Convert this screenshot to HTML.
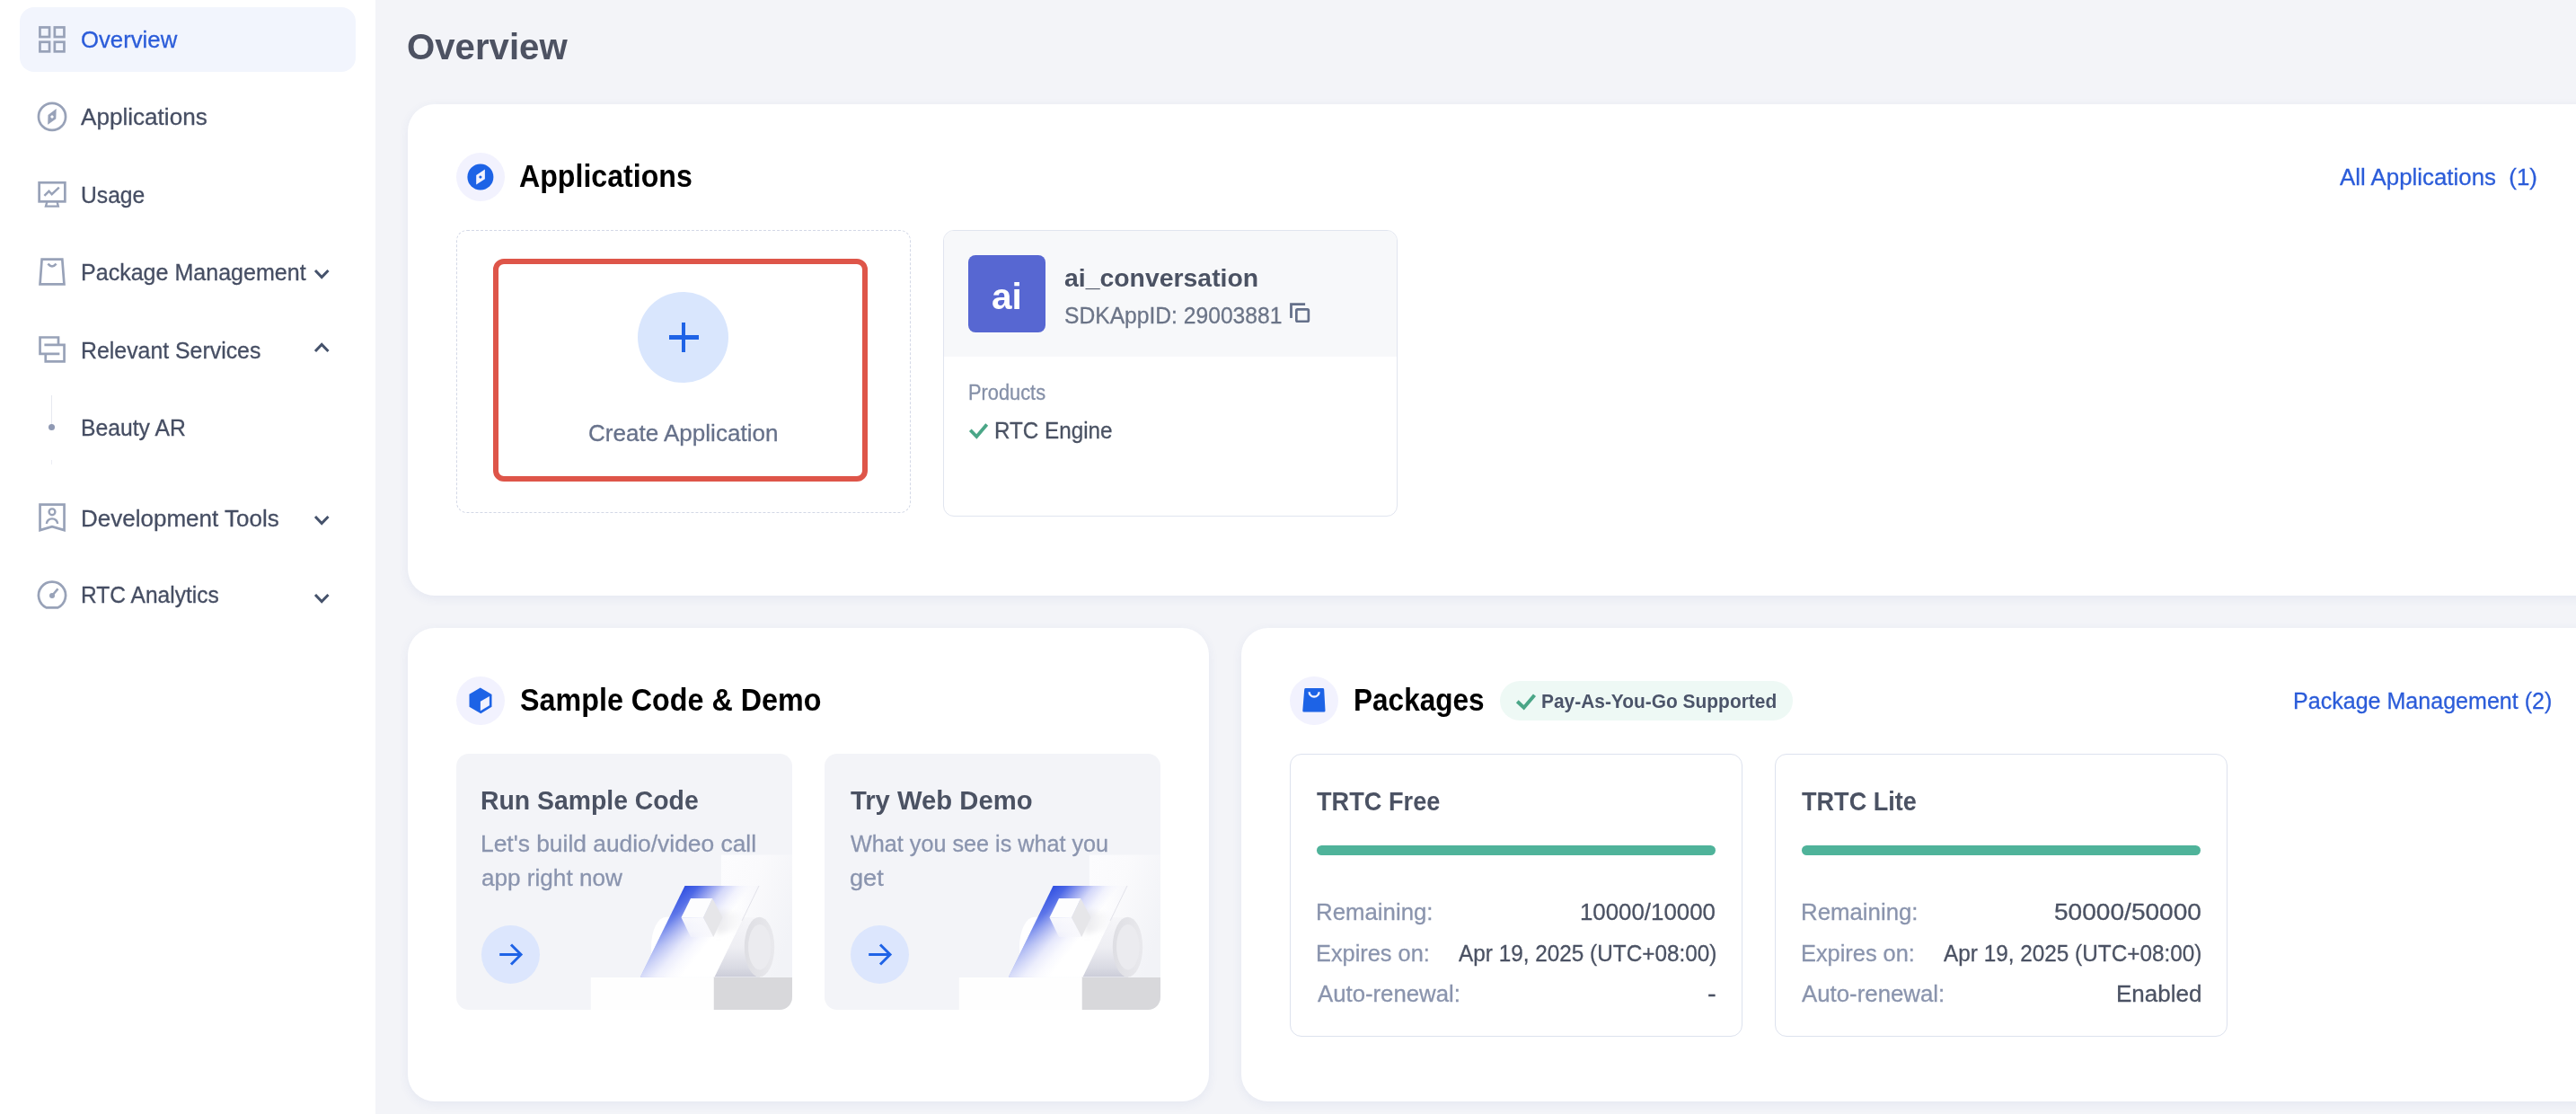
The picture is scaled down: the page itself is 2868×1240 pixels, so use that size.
<!DOCTYPE html>
<html lang="en">
<head>
<meta charset="utf-8">
<title>Overview</title>
<style>
*{box-sizing:border-box;margin:0;padding:0}
html,body{width:2868px;height:1240px;overflow:hidden}
body{position:relative;background:#f3f4f8;font-family:"Liberation Sans",sans-serif;color:#4a566e}
.abs{position:absolute}
.t{position:absolute;white-space:nowrap;line-height:1;transform-origin:0 0;font-weight:400;-webkit-text-stroke:.3px;text-decoration:none;font-family:inherit;background:none;border:0}
.b{font-weight:700;-webkit-text-stroke:0}
.sidebar{position:absolute;left:0;top:0;width:418px;height:1240px;background:#fff}
.active{position:absolute;left:22px;top:8px;width:374px;height:72px;border-radius:16px;background:#f2f5fd}
.card{position:absolute;background:#fff;border-radius:30px;box-shadow:0 3px 12px rgba(60,85,160,.075)}
.ico{position:absolute;overflow:visible}
.hicon{position:absolute;width:54px;height:54px;border-radius:50%;background:#f2f2fe}
</style>
</head>
<body>
<div class="sidebar"></div>
<div class="active"></div>

<!-- sidebar icons -->
<svg class="ico" style="left:40px;top:26px" width="36" height="36" viewBox="0 0 36 36" fill="none" stroke="#98a2b8" stroke-width="2.7">
  <rect x="4.45" y="4.45" width="10.6" height="10.6"/><rect x="20.85" y="4.45" width="10.6" height="10.6"/>
  <rect x="4.45" y="20.75" width="10.6" height="10.6"/><rect x="20.85" y="20.75" width="10.6" height="10.6"/>
</svg>
<svg class="ico" style="left:40px;top:112px" width="36" height="36" viewBox="0 0 36 36" fill="none" stroke="#98a2b8" stroke-width="2.7">
  <circle cx="18" cy="17.9" r="15.05"/>
  <path d="M22.7 9.1 L22.3 20.3 L13.2 26.8 L13.5 16 Z" fill="#98a2b8" stroke="none"/>
  <path d="M18 15.9 L20 17.9 L18 19.9 L16 17.9 Z" fill="#fff" stroke="none"/>
</svg>
<svg class="ico" style="left:40px;top:198px" width="36" height="36" viewBox="0 0 36 36" fill="none" stroke="#98a2b8" stroke-width="2.7">
  <rect x="3.65" y="5.25" width="28.7" height="21.1"/>
  <path d="M12.45 26.4 L10.95 31.65 H24.85 L23.55 26.4" stroke-width="2.3"/>
  <path d="M9.4 19.8 L14.5 14.8 L17.7 18.2 L25.8 10.6" stroke-width="2.4"/>
</svg>
<svg class="ico" style="left:40px;top:284px" width="36" height="36" viewBox="0 0 36 36" fill="none" stroke="#98a2b8" stroke-width="2.7">
  <path d="M6.6 4.55 H29.3 L31.45 32.45 H4.55 Z"/>
  <path d="M13.4 9.6 Q18 15.2 22.6 9.6" stroke-width="2.5"/>
</svg>
<svg class="ico" style="left:40px;top:371px" width="36" height="36" viewBox="0 0 36 36" fill="none" stroke="#98a2b8" stroke-width="2.7">
  <path d="M25 12.85 V4.5 H4.55 V22.8 H26.35"/>
  <path d="M10.75 22.8 V31.45 H31.55 V12.85 H9.4"/>
</svg>
<div class="abs" style="left:57px;top:440px;width:1px;height:32px;background:#e6e9f0"></div>
<div class="abs" style="left:57px;top:512px;width:1px;height:5px;background:#eceef4"></div>
<div class="abs" style="left:54px;top:472px;width:7px;height:7px;border-radius:50%;background:#8f99b3"></div>
<svg class="ico" style="left:40px;top:558px" width="36" height="36" viewBox="0 0 36 36" fill="none" stroke="#98a2b8" stroke-width="2.7">
  <path d="M4.55 32.1 V3.55 H31.55 V32.1 L18 28.25 Z"/>
  <circle cx="18" cy="11.8" r="3.4" stroke-width="2.4"/>
  <path d="M11.9 24.9 A6.1 5.5 0 0 1 24.1 24.9" stroke-width="2.4"/>
</svg>
<svg class="ico" style="left:40px;top:644px" width="36" height="36" viewBox="0 0 36 36" fill="none" stroke="#98a2b8" stroke-width="2.7">
  <path d="M11.88 32.45 A15.05 15.05 0 1 1 24.12 32.45 Z"/>
  <path d="M18 19 L24.5 11.4" stroke-width="2.5"/>
  <circle cx="18" cy="19" r="3" fill="#98a2b8" stroke="none"/>
</svg>
<!-- chevrons -->
<svg class="ico" style="left:348px;top:297px" width="20" height="16" viewBox="0 0 20 16" fill="none" stroke="#45526b" stroke-width="3"><path d="M3 4 L10.2 11.5 L17.5 4"/></svg>
<svg class="ico" style="left:348px;top:379px" width="20" height="16" viewBox="0 0 20 16" fill="none" stroke="#45526b" stroke-width="3"><path d="M3 12 L10.2 4.5 L17.5 12"/></svg>
<svg class="ico" style="left:348px;top:570.5px" width="20" height="16" viewBox="0 0 20 16" fill="none" stroke="#45526b" stroke-width="3"><path d="M3 4 L10.2 11.5 L17.5 4"/></svg>
<svg class="ico" style="left:348px;top:657.5px" width="20" height="16" viewBox="0 0 20 16" fill="none" stroke="#45526b" stroke-width="3"><path d="M3 4 L10.2 11.5 L17.5 4"/></svg>

<!-- Applications card -->
<div class="card" style="left:454px;top:115.5px;width:2500px;height:547px"></div>
<div class="hicon" style="left:508px;top:169.8px"></div>
<svg class="ico" style="left:520px;top:182px" width="30" height="30" viewBox="0 0 30 30">
  <circle cx="14.9" cy="14.9" r="14.5" fill="#1d63e6"/>
  <path d="M19.9 6.6 V17.3 L10.2 23.6 V12.9 Z" fill="#f2f2fe"/>
  <path d="M14.9 13.2 L16.8 15.1 L14.9 17 L13 15.1 Z" fill="#1d63e6"/>
</svg>

<!-- create app -->
<div class="abs" style="left:508px;top:256px;width:506px;height:315px;border:1px dashed #d3d8e6;border-radius:12px"></div>
<div class="abs" style="left:549px;top:288px;width:417px;height:248px;border:6px solid #de5549;border-radius:12px"></div>
<div class="abs" style="left:710.3px;top:324.5px;width:101px;height:101px;border-radius:50%;background:#d9e6fd"></div>
<div class="abs" style="left:744.5px;top:373px;width:33px;height:4.5px;background:#1f63e6"></div>
<div class="abs" style="left:758.7px;top:358.5px;width:4.6px;height:33px;background:#1f63e6"></div>

<!-- app card -->
<div class="abs" style="left:1050px;top:256px;width:506px;height:319px;border:1px solid #e1e5ef;border-radius:12px;background:#fff;overflow:hidden">
  <div class="abs" style="left:0;top:0;width:506px;height:140.4px;background:#f7f8fa"></div>
</div>
<div class="abs" style="left:1078px;top:284px;width:86px;height:86px;border-radius:8px;background:#5767d2"></div>
<svg class="ico" style="left:1434px;top:334px" width="28" height="28" viewBox="0 0 28 28" fill="none" stroke="#65708a" stroke-width="2.7">
  <rect x="9.35" y="10.45" width="13.5" height="13.3" rx="1.2"/>
  <path d="M3.5 19.9 V4.6 H19.1" stroke-width="2.8"/>
</svg>
<svg class="ico" style="left:1077px;top:468px" width="26" height="24" viewBox="0 0 26 24" fill="none" stroke="#4aa687" stroke-width="3.8"><path d="M3.3 10.8 L10.3 18 L21.7 4.5"/></svg>

<!-- Sample Code & Demo card -->
<div class="card" style="left:454px;top:699px;width:892px;height:527px"></div>
<div class="hicon" style="left:508px;top:753px"></div>
<svg class="ico" style="left:520px;top:764px" width="30" height="32" viewBox="0 0 30 32">
  <path d="M14.8 1.6 L27.5 9 V22.8 L15.3 30.3 L2.5 22.8 V8.7 Z" fill="#1d63e6"/>
  <path d="M14.9 16.8 L24.9 11 V21.2 L14.9 27.2 Z" fill="#f2f2fe"/>
</svg>

<svg width="0" height="0" style="position:absolute">
  <defs>
    <linearGradient id="gEdge" gradientUnits="userSpaceOnUse" x1="254.5" y1="147" x2="301.1" y2="183">
      <stop offset="0" stop-color="#2f4fe1"/><stop offset=".2" stop-color="#4864e6"/>
      <stop offset=".4" stop-color="#8d9bee"/><stop offset=".62" stop-color="#d3d7f9"/><stop offset=".82" stop-color="#f1f2fd"/><stop offset="1" stop-color="#ffffff"/>
    </linearGradient>
    <linearGradient id="gFadeV" gradientUnits="userSpaceOnUse" x1="0" y1="147" x2="0" y2="249">
      <stop offset="0" stop-color="#fff" stop-opacity="0"/><stop offset=".3" stop-color="#fff" stop-opacity=".12"/><stop offset=".65" stop-color="#fff" stop-opacity=".45"/><stop offset="1" stop-color="#fff" stop-opacity=".66"/>
    </linearGradient>
    <linearGradient id="gParaR" gradientUnits="userSpaceOnUse" x1="306" y1="147" x2="338" y2="147">
      <stop offset="0" stop-color="#f6f6fb" stop-opacity="0"/><stop offset="1" stop-color="#f5f5fa" stop-opacity=".85"/>
    </linearGradient>
    <linearGradient id="gBack" x1="0" y1="0" x2="1" y2="0.55">
      <stop offset="0" stop-color="#fcfcfe"/><stop offset=".45" stop-color="#fafafc"/><stop offset="1" stop-color="#f2f3f7"/>
    </linearGradient>
    <linearGradient id="gCyl" x1="0" y1="0" x2="0" y2="1">
      <stop offset="0" stop-color="#f6f6f9"/><stop offset=".5" stop-color="#eeeef3"/><stop offset=".85" stop-color="#d9dae3"/><stop offset="1" stop-color="#cbccd8"/>
    </linearGradient>
    <linearGradient id="gRing" x1="0" y1="0" x2="1" y2="0">
      <stop offset="0" stop-color="#dedee3"/><stop offset="1" stop-color="#e9e9ed"/>
    </linearGradient>
    <linearGradient id="gCubeF" x1="0" y1="0" x2="0" y2="1">
      <stop offset="0" stop-color="#fafafd"/><stop offset=".7" stop-color="#f8f8fc" stop-opacity=".85"/><stop offset="1" stop-color="#f6f6fb" stop-opacity=".5"/>
    </linearGradient>
    <linearGradient id="gShadow" x1="0" y1="0" x2="1" y2="0">
      <stop offset="0" stop-color="#d6d6db" stop-opacity=".6"/><stop offset="1" stop-color="#e8e8ec" stop-opacity="0"/>
    </linearGradient>
    <filter id="fBlur" x="-20%" y="-40%" width="140%" height="180%"><feGaussianBlur stdDeviation="3"/></filter>
    <g id="illus">
      <rect x="294.9" y="112.5" width="80" height="137" fill="url(#gBack)"/>
      <!-- cylinder -->
      <path d="M233.5 181.8 H338 V248.6 H233.5 A16.5 33.4 0 0 1 233.5 181.8 Z" fill="#ffffff"/>
      <path d="M300 181.8 H338 V248.6 H286 Z" fill="url(#gCyl)"/>
      <ellipse cx="337.5" cy="215.2" rx="16.7" ry="33.4" fill="url(#gRing)"/>
      <ellipse cx="337.8" cy="215.2" rx="12.7" ry="25.3" fill="#ebebef"/>
      <!-- parallelogram -->
      <path d="M254.5 147 H337 L287.4 248.6 H204.9 Z" fill="url(#gEdge)"/>
      <path d="M254.5 147 H337 L287.4 248.6 H204.9 Z" fill="url(#gFadeV)"/>
      <path d="M254.5 147 H337 L287.4 248.6 H204.9 Z" fill="url(#gParaR)"/>
      <path d="M337 147 L318 186" stroke="#dcdce4" stroke-width=".8" fill="none"/>
      <!-- cube shadow -->
      <path d="M288 174 L322 178 L316 194 L290 201 Z" fill="url(#gShadow)" filter="url(#fBlur)"/>
      <!-- cube -->
      <path d="M250.5 182.3 H275 L286.3 203.9 H261 Z" fill="url(#gCubeF)"/>
      <path d="M261 161 H285.2 L275 182.3 H250.5 Z" fill="#fdfdfe"/>
      <path d="M285.2 161 L296.5 182.3 L286.3 203.9 L275 182.3 Z" fill="#e6e6e9"/>
      <!-- platform -->
      <rect x="149.8" y="249" width="137" height="40" fill="#fefefe"/>
      <rect x="286.8" y="249" width="90" height="40" fill="#d8d8db"/>
    </g>
  </defs>
</svg>
<div class="abs" style="left:508px;top:839px;width:374px;height:285px;border-radius:14px;background:#f3f4f8;overflow:hidden">
  <svg class="abs" style="left:0;top:0" width="374" height="285" viewBox="0 0 374 285"><use href="#illus"/></svg>
</div>
<div class="abs" style="left:918px;top:839px;width:374px;height:285px;border-radius:14px;background:#f3f4f8;overflow:hidden">
  <svg class="abs" style="left:0;top:0" width="374" height="285" viewBox="0 0 374 285"><use href="#illus"/></svg>
</div>
<div class="abs" style="left:536px;top:1030px;width:65px;height:65px;border-radius:50%;background:#dce6fd"></div>
<div class="abs" style="left:946.5px;top:1030px;width:65px;height:65px;border-radius:50%;background:#dce6fd"></div>
<svg class="ico" style="left:554px;top:1048px" width="30" height="30" viewBox="0 0 30 30" fill="none" stroke="#1f63e6" stroke-width="3"><path d="M2.2 14.5 H25 M15 3.5 L26 14.5 L15 25.5"/></svg>
<svg class="ico" style="left:964.5px;top:1048px" width="30" height="30" viewBox="0 0 30 30" fill="none" stroke="#1f63e6" stroke-width="3"><path d="M2.2 14.5 H25 M15 3.5 L26 14.5 L15 25.5"/></svg>

<!-- Packages card -->
<div class="card" style="left:1382px;top:699px;width:1600px;height:527px"></div>
<div class="hicon" style="left:1436px;top:753px"></div>
<svg class="ico" style="left:1448px;top:764px" width="30" height="32" viewBox="0 0 30 32">
  <path d="M5.7 2.1 H24.7 Q26.1 2.1 26.2 3.5 L27.5 26.9 Q27.6 28.5 26 28.5 H3.8 Q2.2 28.5 2.3 26.9 L4.2 3.5 Q4.3 2.1 5.7 2.1 Z" fill="#1d63e6"/>
  <path d="M9.6 6.3 A5.5 5.2 0 0 0 20.6 6.3" fill="none" stroke="#f2f2fe" stroke-width="2.3"/>
</svg>
<div class="abs" style="left:1670px;top:758px;width:326px;height:44px;border-radius:22px;background:#eef9f5"></div>
<svg class="ico" style="left:1685px;top:769px" width="28" height="24" viewBox="0 0 28 24" fill="none" stroke="#4aa687" stroke-width="4"><path d="M4.3 11.7 L11.6 18.7 L23.5 4.7"/></svg>

<div class="abs" style="left:1436px;top:839px;width:504px;height:315px;border:1px solid #dde2ee;border-radius:13px;background:#fff"></div>
<div class="abs" style="left:1466px;top:940.5px;width:444px;height:11.5px;border-radius:6px;background:#4fb39a"></div>
<div class="abs" style="left:1976px;top:839px;width:504px;height:315px;border:1px solid #dde2ee;border-radius:13px;background:#fff"></div>
<div class="abs" style="left:2006px;top:940.5px;width:444px;height:11.5px;border-radius:6px;background:#4fb39a"></div>

<nav>
<a class="t" style="left:89.51px;top:31.45px;font-size:26.5px;color:#2b5cd9;transform:scaleX(0.9708)">Overview</a>
<a class="t" style="left:90.20px;top:117.15px;font-size:26.5px;color:#464e63;transform:scaleX(0.9849)">Applications</a>
<a class="t" style="left:90.31px;top:203.65px;font-size:26.5px;color:#464e63;transform:scaleX(0.9302)">Usage</a>
<a class="t" style="left:90.24px;top:289.95px;font-size:26.5px;color:#464e63;transform:scaleX(0.9450)">Package Management</a>
<a class="t" style="left:90.25px;top:377.15px;font-size:26.5px;color:#464e63;transform:scaleX(0.9382)">Relevant Services</a>
<a class="t" style="left:90.37px;top:462.85px;font-size:26.5px;color:#464e63;transform:scaleX(0.9322)">Beauty AR</a>
<a class="t" style="left:90.42px;top:563.75px;font-size:26.5px;color:#464e63;transform:scaleX(0.9813)">Development Tools</a>
<a class="t" style="left:90.38px;top:649.15px;font-size:26.5px;color:#464e63;transform:scaleX(0.9271)">RTC Analytics</a>
</nav>
<main>
<header>
<h1 class="t b" style="left:452.97px;top:31.05px;font-size:41.5px;color:#4d5262;transform:scaleX(0.9681)">Overview</h1>
</header>
<section>
<h2 class="t b" style="left:578.17px;top:178.55px;font-size:35.5px;color:#000;transform:scaleX(0.9051)">Applications</h2>
<a class="t" style="left:2604.60px;top:184.35px;font-size:26.5px;color:#2b5cd9;transform:scaleX(0.9760)">All Applications  (1)</a>
<button class="t" style="left:654.53px;top:469.35px;font-size:26.5px;color:#66718a;transform:scaleX(0.9829)">Create Application</button>
<span class="t b" style="left:1104.42px;top:309.80px;font-size:41px;color:#fff;transform:scaleX(0.9901)">ai</span>
<h3 class="t b" style="left:1184.78px;top:295.80px;font-size:28px;color:#4b5263;transform:scaleX(1.0140)">ai_conversation</h3>
<span class="t" style="left:1184.63px;top:337.60px;font-size:26px;color:#6b7487;transform:scaleX(0.9474)">SDKAppID: 29003881</span>
<span class="t" style="left:1078.16px;top:425.80px;font-size:23px;color:#8590a8;transform:scaleX(0.9482)">Products</span>
<span class="t" style="left:1106.79px;top:465.50px;font-size:26px;color:#4a5263;transform:scaleX(0.9319)">RTC Engine</span>
</section>
<section>
<h2 class="t b" style="left:578.84px;top:761.55px;font-size:35.5px;color:#000;transform:scaleX(0.9094)">Sample Code &amp; Demo</h2>
<h3 class="t b" style="left:535.19px;top:876.80px;font-size:29px;color:#4b5263;transform:scaleX(0.9781)">Run Sample Code</h3>
<span class="t" style="left:535.08px;top:926.00px;font-size:26px;color:#8a94ae;transform:scaleX(1.0142)">Let's build audio/video call</span>
<span class="t" style="left:536.07px;top:963.60px;font-size:26px;color:#8a94ae;transform:scaleX(1.0047)">app right now</span>
<h3 class="t b" style="left:946.79px;top:876.80px;font-size:29px;color:#4b5263;transform:scaleX(1.0081)">Try Web Demo</h3>
<span class="t" style="left:947.04px;top:926.00px;font-size:26px;color:#8a94ae;transform:scaleX(0.9690)">What you see is what you</span>
<span class="t" style="left:946.42px;top:963.60px;font-size:26px;color:#8a94ae;transform:scaleX(1.0435)">get</span>
</section>
<section>
<h2 class="t b" style="left:1507.02px;top:761.55px;font-size:35.5px;color:#000;transform:scaleX(0.8886)">Packages</h2>
<span class="t b" style="left:1716.46px;top:769.80px;font-size:22px;color:#4b5469;transform:scaleX(0.9505)">Pay-As-You-Go Supported</span>
<a class="t" style="left:2553.46px;top:767.05px;font-size:26.5px;color:#2b5cd9;transform:scaleX(0.9455)">Package Management (2)</a>
<h3 class="t b" style="left:1465.84px;top:876.80px;font-size:30px;color:#4b5263;transform:scaleX(0.9057)">TRTC Free</h3>
<span class="t" style="left:1464.88px;top:1002.10px;font-size:26px;color:#8a94ad;transform:scaleX(0.9923)">Remaining:</span>
<span class="t" style="left:1759.41px;top:1002.10px;font-size:26px;color:#4b5263;transform:scaleX(0.9940)">10000/10000</span>
<span class="t" style="left:1464.94px;top:1047.90px;font-size:26px;color:#8a94ad;transform:scaleX(0.9747)">Expires on:</span>
<span class="t" style="left:1624.28px;top:1047.90px;font-size:26px;color:#4b5263;transform:scaleX(0.9359)">Apr 19, 2025 (UTC+08:00)</span>
<span class="t" style="left:1466.83px;top:1092.90px;font-size:26px;color:#8a94ad;transform:scaleX(0.9903)">Auto-renewal:</span>
<span class="t" style="left:1900.97px;top:1092.90px;font-size:26px;color:#4b5263;transform:scaleX(1.1239)">-</span>
<h3 class="t b" style="left:2005.81px;top:876.80px;font-size:30px;color:#4b5263;transform:scaleX(0.9027)">TRTC Lite</h3>
<span class="t" style="left:2004.65px;top:1002.10px;font-size:26px;color:#8a94ad;transform:scaleX(0.9926)">Remaining:</span>
<span class="t" style="left:2286.72px;top:1002.10px;font-size:26px;color:#4b5263;transform:scaleX(1.0799)">50000/50000</span>
<span class="t" style="left:2004.71px;top:1047.90px;font-size:26px;color:#8a94ad;transform:scaleX(0.9753)">Expires on:</span>
<span class="t" style="left:2164.23px;top:1047.90px;font-size:26px;color:#4b5263;transform:scaleX(0.9360)">Apr 19, 2025 (UTC+08:00)</span>
<span class="t" style="left:2006.21px;top:1092.90px;font-size:26px;color:#8a94ad;transform:scaleX(0.9929)">Auto-renewal:</span>
<span class="t" style="left:2356.47px;top:1092.90px;font-size:26px;color:#4b5263;transform:scaleX(0.9994)">Enabled</span>
</section>
</main>
</body>
</html>
